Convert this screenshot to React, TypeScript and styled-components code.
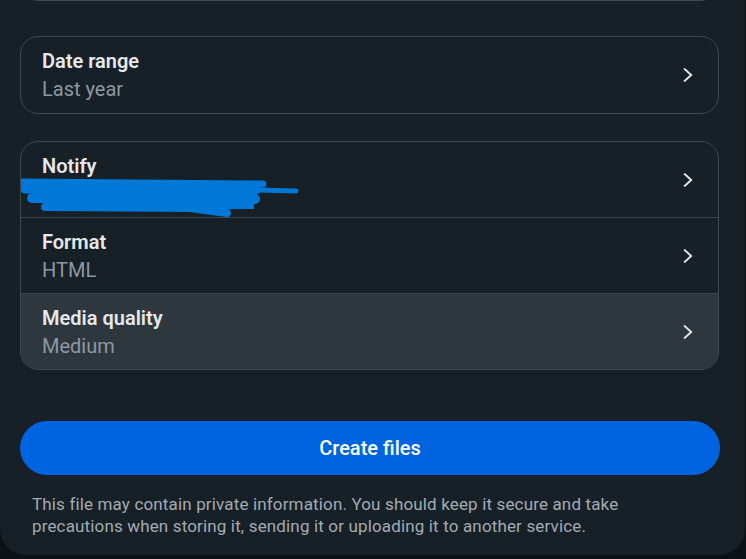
import React from "react";
import styled, { createGlobalStyle } from "styled-components";

const Global = createGlobalStyle`
  html, body { margin: 0; padding: 0; background: #0b1115; }
  body { font-family: Roboto, "Noto Sans", Arial, sans-serif; -webkit-font-smoothing: antialiased; }
  #root { width: 746px; height: 559px; overflow: hidden; }
`;

const Panel = styled.div`
  width: 745px;
  box-sizing: border-box;
  background: #172027;
  border-radius: 0 0 26px 26px;
  padding: 0 26px 18px 20px;
  display: flex;
  flex-direction: column;
`;

const Card = styled.div<{ $clipTop?: boolean }>`
  border: 1px solid #3b4953;
  border-radius: 18px;
  overflow: hidden;
  display: flex;
  flex-direction: column;
  ${(p) => (p.$clipTop ? "height: 40px; margin-top: -39px; box-sizing: border-box;" : "")}
`;

const Row = styled.div<{ $active?: boolean; $divider?: boolean }>`
  position: relative;
  display: flex;
  align-items: center;
  justify-content: space-between;
  min-height: ${(p) => (p.$divider ? 76 : 75)}px;
  box-sizing: border-box;
  padding: 0 25px 0 21px;
  background: ${(p) => (p.$active ? "#2d373d" : "transparent")};
  border-top: ${(p) => (p.$divider ? "1px solid #38454e" : "none")};
`;

const RowSingle = styled(Row)`
  min-height: 76px;
`;

const TextBlock = styled.div`
  display: flex;
  flex-direction: column;
  gap: 4px;
`;

const Title = styled.div`
  color: #e6e8eb;
  font-size: 20px;
  font-weight: 600;
  line-height: 24px;
`;

const Subtitle = styled.div`
  color: #8c98a1;
  font-size: 20px;
  font-weight: 400;
  line-height: 24px;
`;

const Spacer = styled.div<{ $h: number }>`
  height: ${(p) => p.$h}px;
  flex: none;
`;

const Button = styled.button`
  height: 54px;
  border: none;
  border-radius: 27px;
  background: #0064e0;
  color: #ffffff;
  font-family: inherit;
  font-size: 20px;
  font-weight: 500;
  width: 700px;
  margin-right: -1px;
  cursor: pointer;
`;

const Disclaimer = styled.p`
  margin: 0;
  padding: 0 60px 0 12px;
  color: #a2abb2;
  font-size: 17px;
  letter-spacing: 0.15px;
  line-height: 22px;
`;

const Redaction = styled.svg`
  position: absolute;
  left: -20px;
  top: 0;
  pointer-events: none;
`;

const Chevron = () => (
  <svg width="10" height="14" viewBox="0 0 10 14" fill="none">
    <path d="M1.8 1.2 L8.2 7 L1.8 12.8" stroke="#e6e8eb" strokeWidth="1.9" strokeLinecap="square" />
  </svg>
);

const Scribble = () => (
  <Redaction width="320" height="76" viewBox="0 0 320 76">
    <g stroke="#0078d7" strokeLinecap="round" fill="none">
      <path d="M 13 40 L 262 42" strokeWidth="7" />
      <path d="M 24 47 L 255 48" strokeWidth="9" />
      <path d="M 31 56 L 254 57" strokeWidth="10" />
      <path d="M 44 65 L 189 66 L 226 71" strokeWidth="8" />
      <path d="M 257 48 L 295 49" strokeWidth="5" />
    </g>
    <rect x="59" y="39" width="194" height="28" fill="#0078d7" />
  </Redaction>
);

type Item = { title: string; value: string };

const items: Item[] = [
  { title: "Notify", value: "" },
  { title: "Format", value: "HTML" },
  { title: "Media quality", value: "Medium" },
];

export default function App() {
  return (
    <>
      <Global />
      <Panel>
        <Card $clipTop />
        <Spacer $h={35} />
        <Card>
          <RowSingle>
            <TextBlock>
              <Title>Date range</Title>
              <Subtitle>Last year</Subtitle>
            </TextBlock>
            <Chevron />
          </RowSingle>
        </Card>
        <Spacer $h={27} />
        <Card>
          {items.map((it, i) => (
            <Row key={it.title} $divider={i > 0} $active={i === 2}>
              <TextBlock>
                <Title>{it.title}</Title>
                <Subtitle>{it.value || "\u00a0"}</Subtitle>
              </TextBlock>
              <Chevron />
              {i === 0 && <Scribble />}
            </Row>
          ))}
        </Card>
        <Spacer $h={51} />
        <Button>Create files</Button>
        <Spacer $h={18} />
        <Disclaimer>
          This file may contain private information. You should keep it secure and take precautions when storing it,
          sending it or uploading it to another service.
        </Disclaimer>
      </Panel>
    </>
  );
}
